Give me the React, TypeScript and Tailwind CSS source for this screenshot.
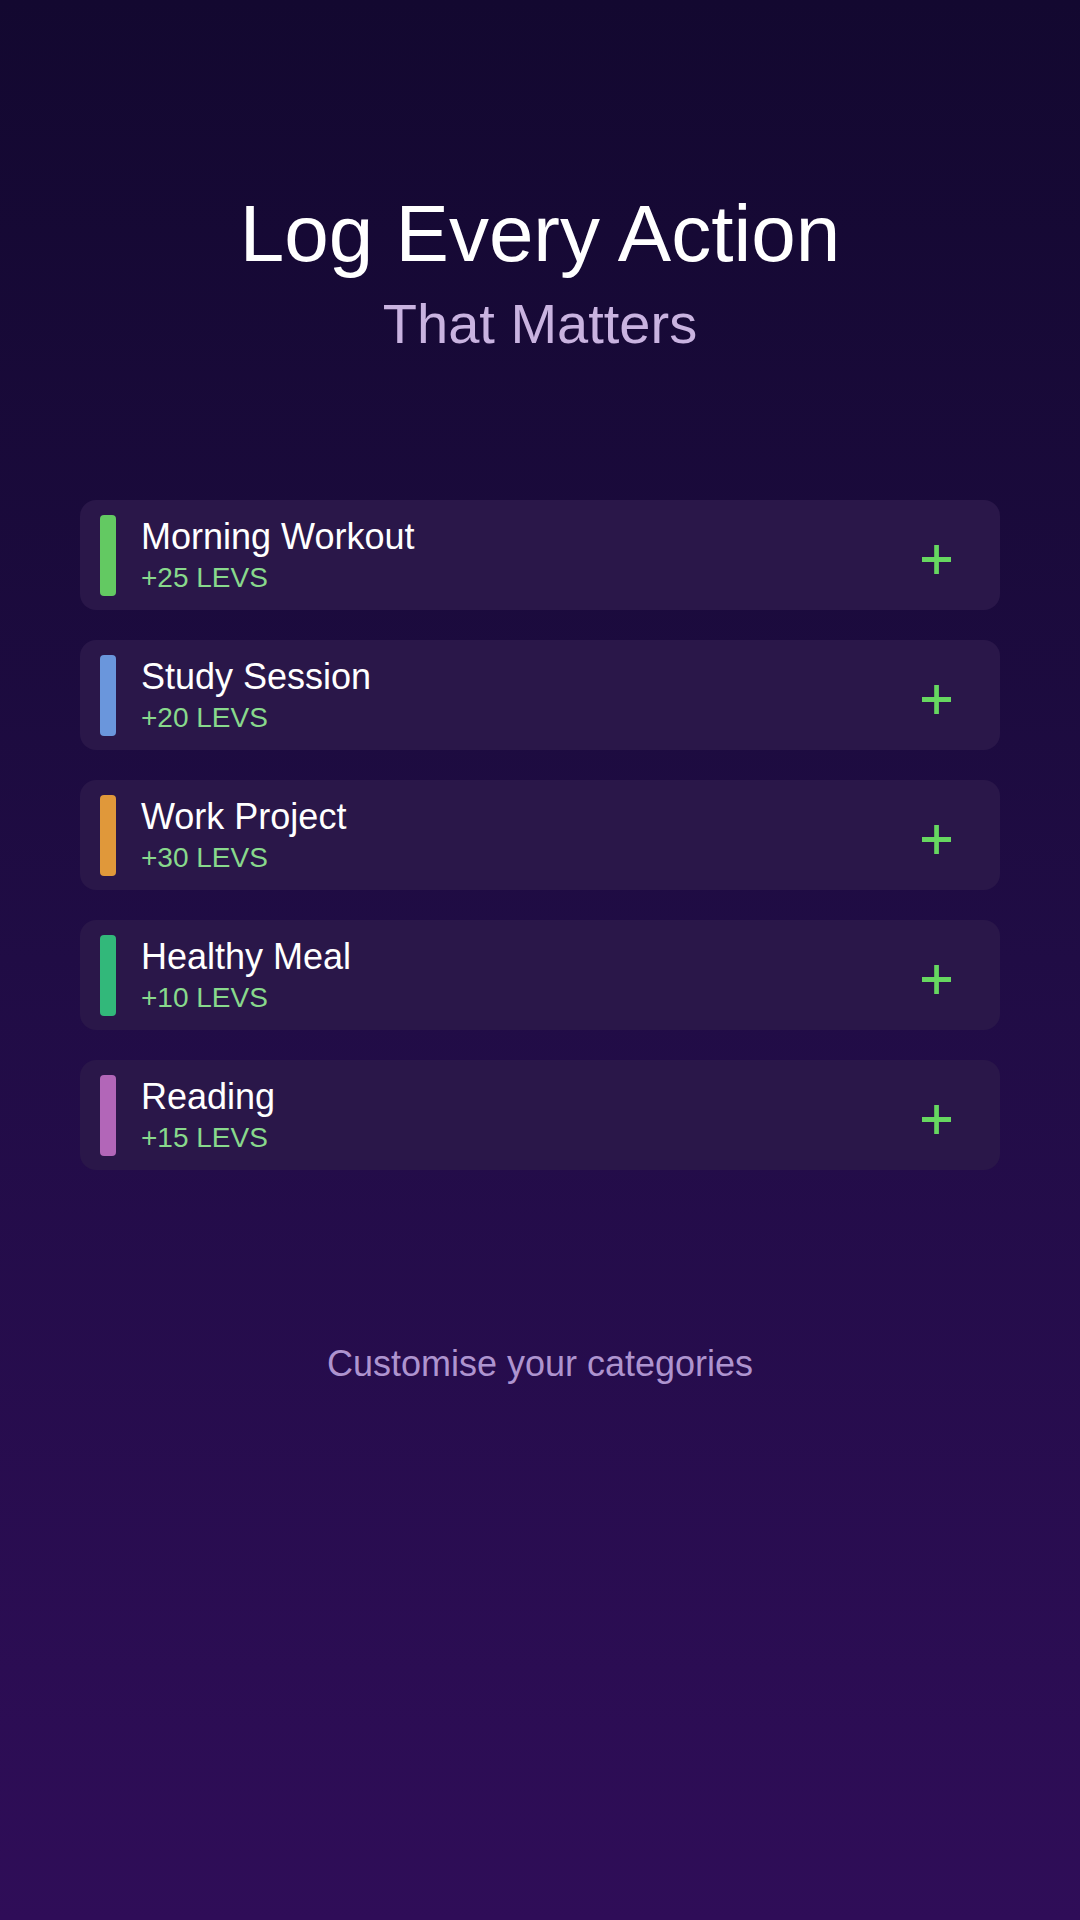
const actions = [
  { name: "Morning Workout", levs: 25, color: "bg-[#63c962]" },
  { name: "Study Session", levs: 20, color: "bg-[#6a96dc]" },
  { name: "Work Project", levs: 30, color: "bg-[#e0983a]" },
  { name: "Healthy Meal", levs: 10, color: "bg-[#32b87a]" },
  { name: "Reading", levs: 15, color: "bg-[#b266b8]" },
];

function PlusIcon() {
  return (
    <svg width="29" height="29" viewBox="0 0 29 29" className="block">
      <rect x="12.2" y="0" width="4.7" height="29" fill="#66d860" />
      <rect x="0" y="12" width="29" height="5" fill="#66d860" />
    </svg>
  );
}

export default function App() {
  return (
    <div
      className="w-[1080px] h-[1920px] flex flex-col items-center bg-gradient-to-b from-[#130830] via-[#200c45] to-[#2f0d58]"
      style={{ fontFamily: '"Liberation Sans", Arial, sans-serif' }}
    >
      <h1 className="mt-[194px] text-[80px] leading-[80px] text-white font-normal">Log Every Action</h1>
      <p className="mt-[22px] text-[56px] leading-[56px] text-[#c9b3e0]">That Matters</p>

      <div className="mt-[148px] w-[920px] flex flex-col gap-[30px]">
        {actions.map((a) => (
          <div
            key={a.name}
            className="h-[110px] rounded-2xl bg-[#2a1749] flex items-center pl-5 pr-[49px]"
          >
            <div className={`w-4 h-[81px] rounded ${a.color}`} />
            <div className="ml-[25px] flex-1 flex flex-col gap-[5px]">
              <span className="text-[36px] leading-[40px] text-white">{a.name}</span>
              <span className="text-[28px] leading-[32px] text-[#88d98c]">+{a.levs} LEVS</span>
            </div>
            <div className="mt-[8px]">
              <PlusIcon />
            </div>
          </div>
        ))}
      </div>

      <p className="mt-[176px] text-[36px] leading-[36px] text-[#ae94cf]">Customise your categories</p>
    </div>
  );
}
